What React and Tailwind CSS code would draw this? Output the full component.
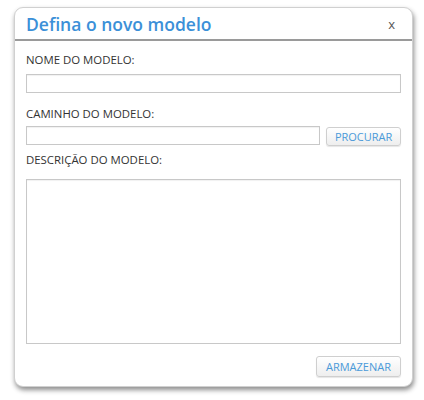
import React from "react";

export default function App() {
    return (
        <div className="w-[424px] h-[400px] bg-white pt-[7px] pl-[14px]" style={{ fontFamily: '"Open Sans", sans-serif' }}>
            <div className="w-[399px] h-[380px] bg-white rounded-[9px] border border-[#d0d0d0] shadow-[1px_3px_5px_rgba(0,0,0,0.45)] flex flex-col">
                <div className="h-[33px] flex items-center justify-between pl-[11px] pr-[17px] border-b-2 border-[#9a9a9a]">
                    <h1 className="text-[17.5px] font-semibold text-[#3b90d8] leading-none mt-[2px]">Defina o novo modelo</h1>
                    <span className="text-[13px] text-[#555] leading-none mt-[1px]">x</span>
                </div>

                <div className="px-[11px] pt-[13px] flex flex-col">
                    <label className="text-[11.4px] text-[#333] leading-none h-[13px]">NOME DO MODELO:</label>
                    <input className="mt-[7px] h-[19px] w-full border border-[#c8c8c8] shadow-[inset_0_1px_1px_rgba(0,0,0,0.06)] outline-none" />

                    <label className="mt-[15px] text-[11.4px] text-[#333] leading-none h-[13px]">CAMINHO DO MODELO:</label>
                    <div className="mt-[5px] flex items-start gap-[6px]">
                        <input className="h-[19px] w-[295px] border border-[#c8c8c8] shadow-[inset_0_1px_1px_rgba(0,0,0,0.06)] outline-none" />
                        <button className="mt-[1px] h-[19px] w-[75px] rounded-[3px] border border-[#cfcfcf] bg-gradient-to-b from-white to-[#eeeeee] text-[11px] text-[#4a9ad9] leading-none shadow-[0_1px_1px_rgba(0,0,0,0.1)]">PROCURAR</button>
                    </div>

                    <label className="mt-[8px] text-[11.4px] text-[#333] leading-none h-[13px]">DESCRIÇÃO DO MODELO:</label>
                    <textarea className="mt-[12px] h-[165px] w-full border border-[#c8c8c8] shadow-[inset_0_1px_1px_rgba(0,0,0,0.06)] outline-none resize-none" />

                    <div className="mt-[12px] flex justify-end">
                        <button className="h-[21px] w-[85px] rounded-[3px] border border-[#cfcfcf] bg-gradient-to-b from-white to-[#eeeeee] text-[11px] text-[#4a9ad9] leading-none shadow-[0_1px_1px_rgba(0,0,0,0.1)]">ARMAZENAR</button>
                    </div>
                </div>
            </div>
        </div>
    );
}
